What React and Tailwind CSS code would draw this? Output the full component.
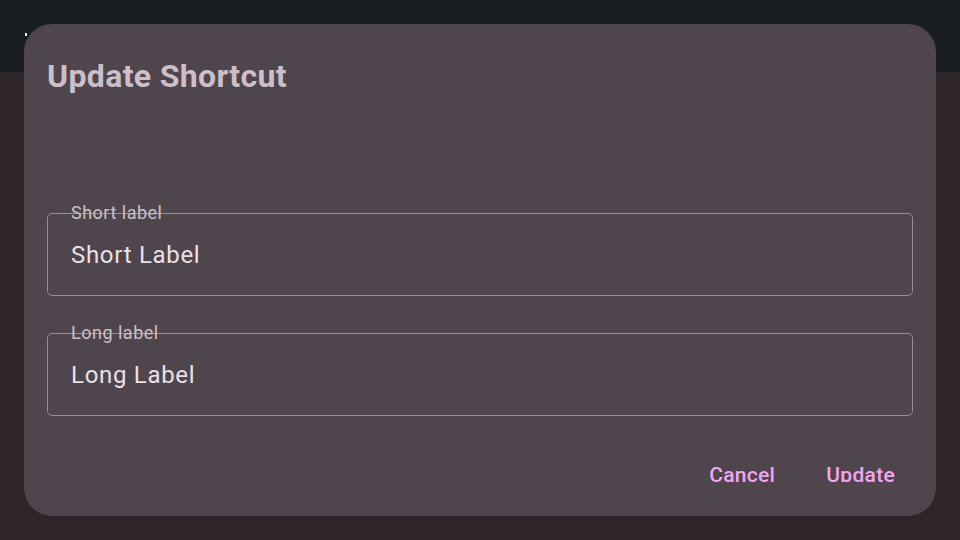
import React from "react";

const font = { fontFamily: "Roboto, 'Noto Sans', sans-serif" };

function Field({ label, value, className = "" }) {
  return (
    <div className={`relative h-[83px] rounded-[5px] border border-[#9a8f97] flex items-center ${className}`}>
      {/* label sits right on the outline, no notch */}
      <span className="absolute left-[23px] top-[-11px] text-[18px] leading-[20px] text-[#cbc0c8] tracking-[0.5px]">
        {label}
      </span>
      <span className="pl-[23px] text-[24px] leading-[32px] text-[#ece0e8] tracking-[0.7px]">{value}</span>
    </div>
  );
}

export default function App() {
  return (
    <div className="relative w-[960px] h-[540px] overflow-hidden bg-[#2e2529]" style={font}>
      {/* app bar behind the scrim */}
      <div className="h-[72px] bg-[#1b1e21] relative">
        <span className="absolute left-[25px] top-[33px] w-[2px] h-[3px] bg-white" />
      </div>

      {/* DIALOG */}
      <div className="absolute left-[24px] top-[24px] w-[912px] h-[492px] rounded-[28px] bg-[#4f454c] px-[23px] flex flex-col">
        <h2 className="mt-[32px] h-[40px] leading-[40px] text-[32px] font-bold text-[#cdbfc9] tracking-[0.35px]">
          Update Shortcut
        </h2>

        <Field label="Short label" value="Short Label" className="mt-[117px]" />
        <Field label="Long label" value="Long Label" className="mt-[37px]" />

        <div className="mt-[47px] flex justify-end gap-[15px] pr-[18px]">
          <button className="px-[18px] h-[19px] overflow-hidden text-[21px] leading-[24px] font-medium text-[#f2a6ee] tracking-[0.3px]">
            Cancel
          </button>
          <button className="px-[18px] h-[19px] overflow-hidden text-[21px] leading-[24px] font-medium text-[#f2a6ee] tracking-[0.3px] mr-[-18px]">
            Update
          </button>
        </div>
      </div>
    </div>
  );
}
